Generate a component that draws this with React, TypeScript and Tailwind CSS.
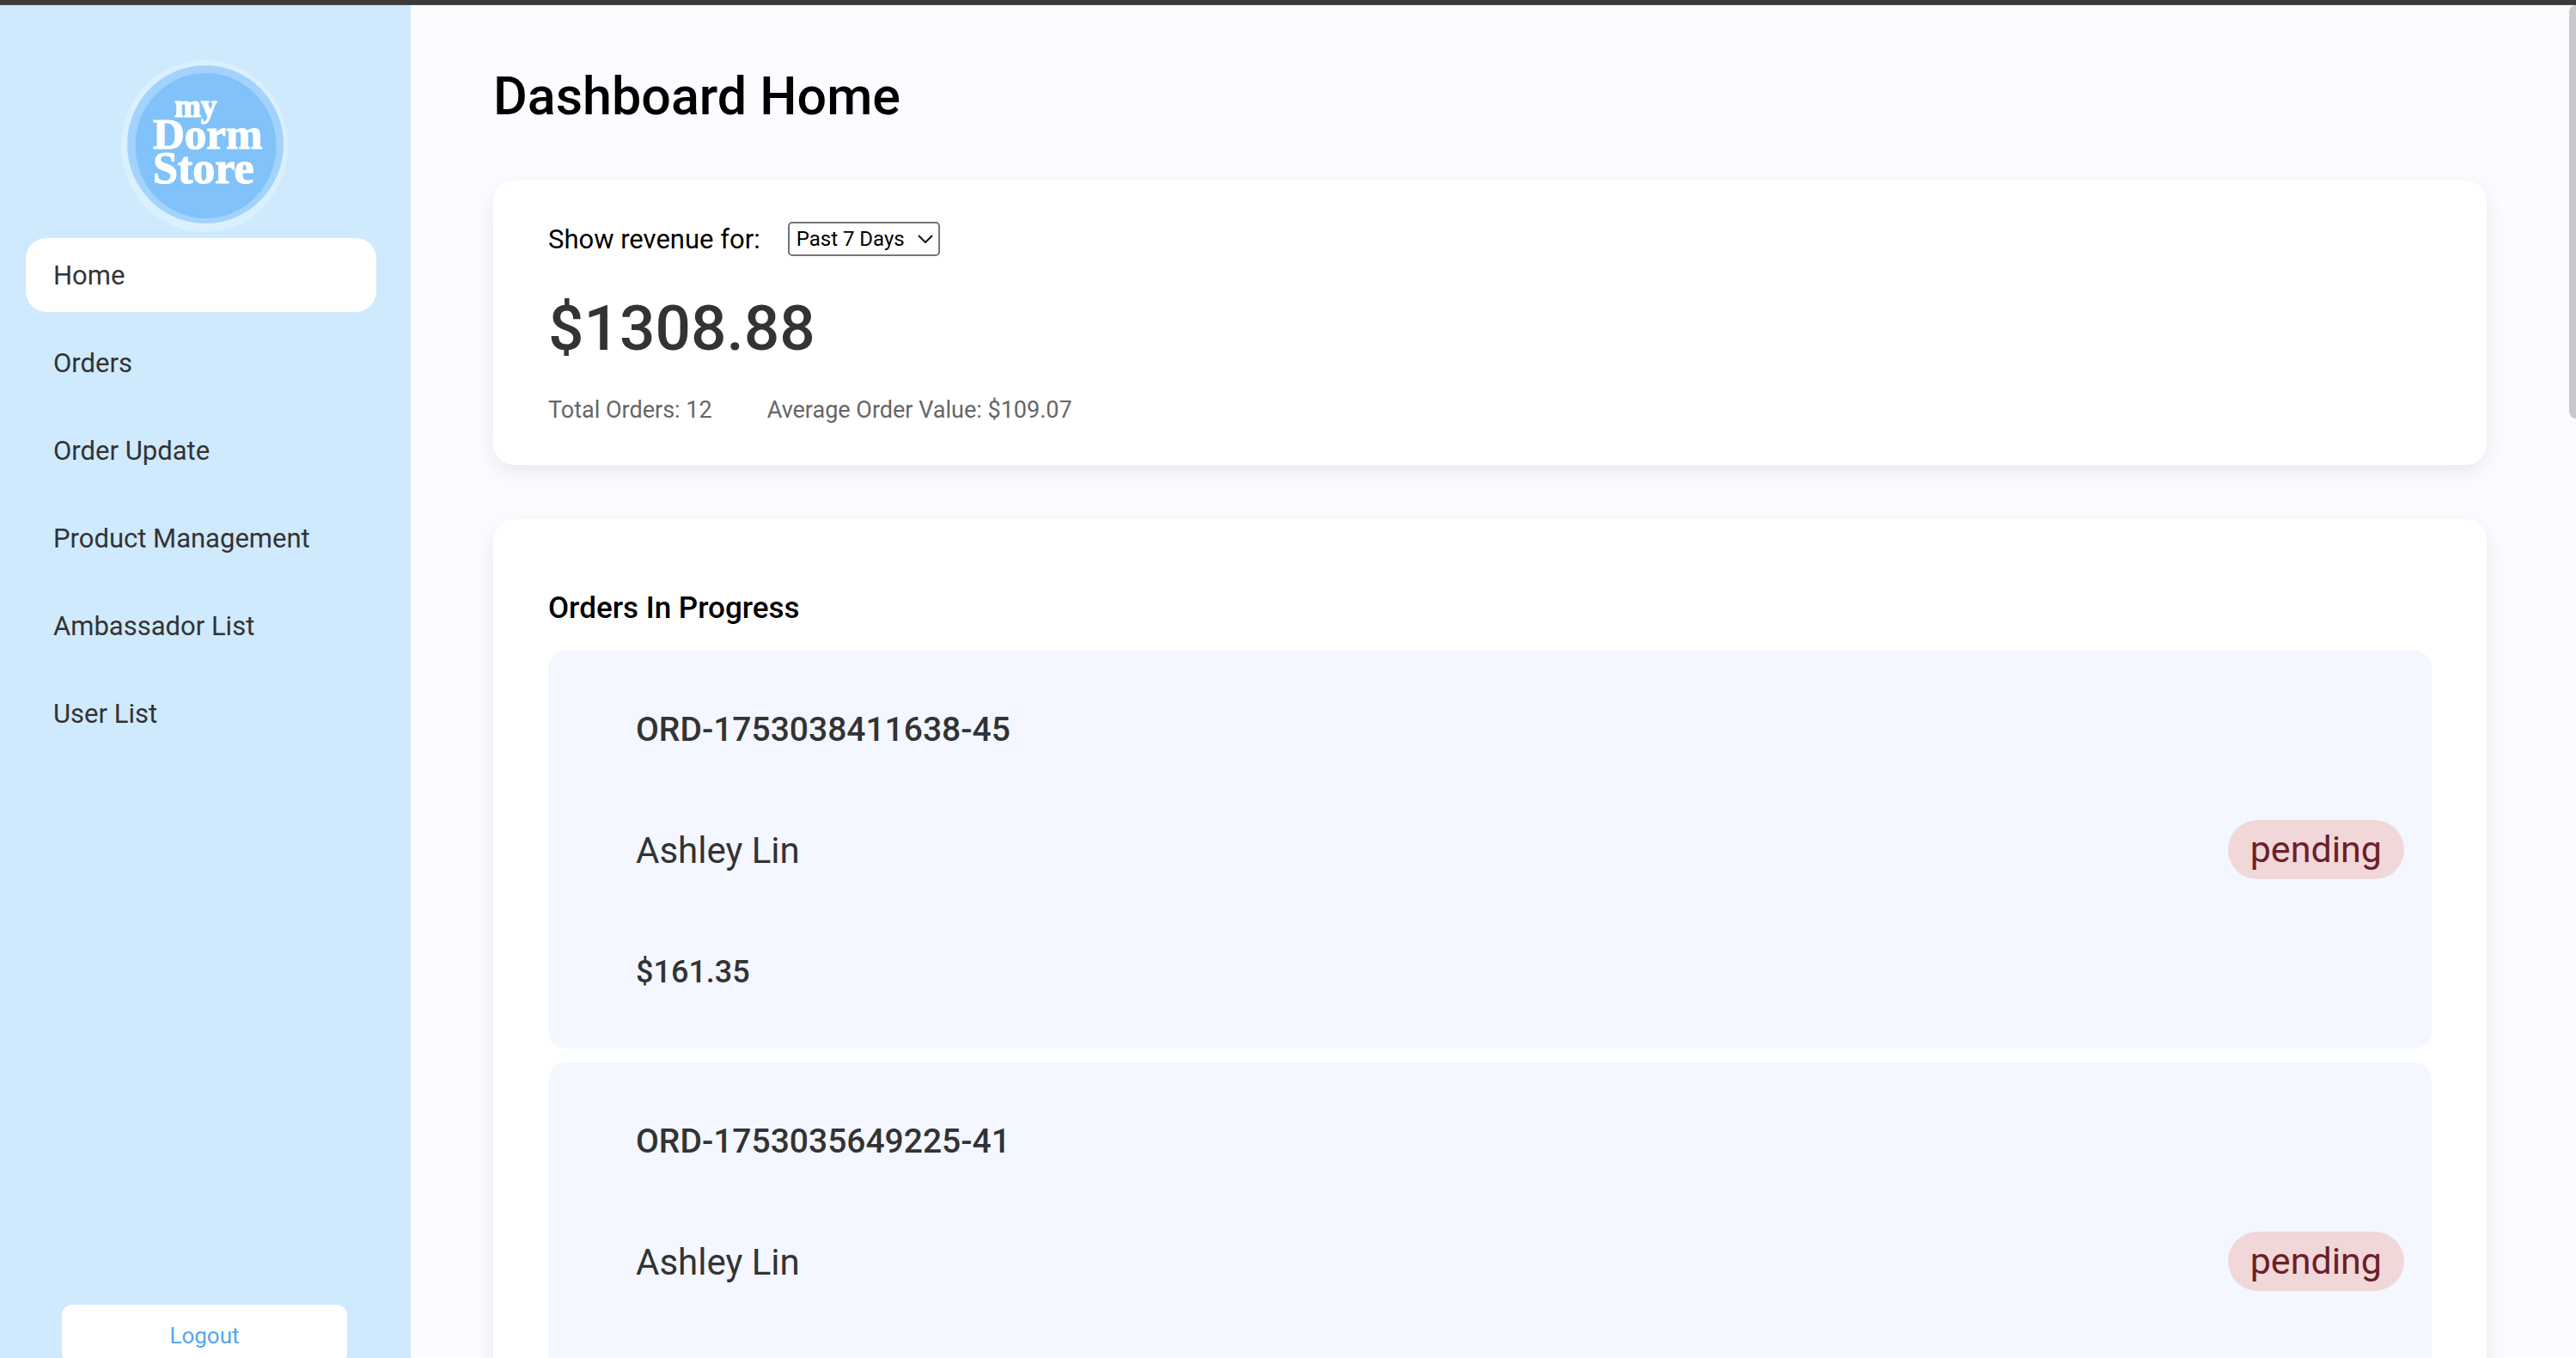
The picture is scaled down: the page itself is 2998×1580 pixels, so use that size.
import React from "react";

type Order = { id: string; customer: string; total: string; status: string };

const navItems = [
  "Home",
  "Orders",
  "Order Update",
  "Product Management",
  "Ambassador List",
  "User List",
];

const orders: Order[] = [
  { id: "ORD-1753038411638-45", customer: "Ashley Lin", total: "$161.35", status: "pending" },
  { id: "ORD-1753035649225-41", customer: "Ashley Lin", total: "$161.35", status: "pending" },
];

function Logo() {
  return (
    <svg
      viewBox="0 0 194 200"
      role="img"
      aria-label="my Dorm Store"
      className="h-[200px] w-[194px] self-center"
    >
      <ellipse cx="97" cy="100" rx="97" ry="100" fill="#dbf0fe" />
      <ellipse cx="98" cy="98" rx="91" ry="92" fill="#a3d3fc" />
      <ellipse cx="98.500" cy="99.500" rx="82" ry="84.500" fill="#80c2f9" />
      <g
        fill="#fff"
        stroke="#fff"
        strokeWidth="1.2"
        fontFamily="'Liberation Serif', serif"
        fontWeight="700"
      >
        <text x="62" y="66" fontSize="37">my</text>
        <text x="37" y="103" fontSize="51">Dorm</text>
        <text x="37" y="143" fontSize="52">Store</text>
      </g>
    </svg>
  );
}

function Sidebar() {
  return (
    <aside className="flex h-screen w-[478px] shrink-0 flex-col bg-[#cfe9fd] pt-16">
      <div className="flex justify-center pr-[3px]">
        <Logo />
      </div>
      <nav className="mt-[7px] flex flex-col gap-4 pr-10 pl-[30px]">
        {navItems.map((item, index) => (
          <a
            key={item}
            href="#"
            aria-current={index === 0 ? "page" : undefined}
            className={
              index === 0
                ? "flex h-[86px] items-center rounded-3xl bg-white px-8 pt-[3px] text-[31px]"
                : "flex h-[86px] items-center rounded-3xl px-8 pt-[3px] text-[31px]"
            }
          >
            {item}
          </a>
        ))}
      </nav>
      <button
        type="button"
        className="mr-[74px] ml-[72px] mt-auto h-[68px] rounded-xl bg-white pt-1 text-[26px] text-[#59a6ea]"
      >
        Logout
      </button>
    </aside>
  );
}

function RevenueCard() {
  return (
    <section className="rounded-3xl bg-white px-16 pt-12 pb-11 shadow-[0_8px_24px_rgba(0,0,0,0.08)]">
      <div className="flex h-10 items-center gap-8">
        <label htmlFor="range" className="pt-[3px] text-[31px] text-black">
          Show revenue for:
        </label>
        <div className="relative">
          <select
            id="range"
            defaultValue="7"
            className="block h-10 w-[177px] appearance-none rounded-[5px] border-2 border-[#767676] bg-white pl-2 text-[24px] leading-9 text-black"
          >
            <option value="7">Past 7 Days</option>
            <option value="30">Past 30 Days</option>
          </select>
          <svg
            viewBox="0 0 18 10"
            aria-hidden="true"
            className="pointer-events-none absolute top-[15px] right-2 h-[10px] w-[18px]"
          >
            <path d="M1 1 L9 9 L17 1" fill="none" stroke="#111" strokeWidth="2" />
          </svg>
        </div>
      </div>
      <p className="mt-11 text-[73px] leading-20 font-medium">$1308.88</p>
      <div className="mt-[35px] flex gap-16 text-[27px] leading-10 text-[#666]">
        <span>Total Orders: 12</span>
        <span>Average Order Value: $109.07</span>
      </div>
    </section>
  );
}

function OrderItem({ order }: { order: Order }) {
  return (
    <li className="flex items-center justify-between rounded-[20px] bg-[#f4f7ff] py-[62px] pr-8 pl-[102px]">
      <div className="flex flex-col gap-[85px] pt-[2px] -mb-px">
        <span className="text-[39px] leading-14 font-medium">{order.id}</span>
        <span className="text-[42px] leading-14">{order.customer}</span>
        <span className="text-[36px] leading-14 font-medium">{order.total}</span>
      </div>
      <span className="flex h-[69px] items-center rounded-full bg-[#f2d7d9] px-[26px] text-[43px] text-[#6b2028]">
        {order.status}
      </span>
    </li>
  );
}

export default function App() {
  return (
    <div className="relative h-screen overflow-hidden bg-[#fbfcff] font-['Roboto',sans-serif] text-[#333]">
      <div className="h-[6px] border-b border-[#4a4a4a] bg-[#3a3a3a]" />
      <div className="flex">
        <Sidebar />
        <main className="min-w-0 flex-1 pt-[70px] pr-[104px] pl-24">
          <h1 className="mb-[62px] text-[61px] leading-[72px] font-medium text-black">Dashboard Home</h1>
          <RevenueCard />
          <section className="mt-[63px] rounded-3xl bg-white px-16 pt-20 pb-16 shadow-[0_8px_24px_rgba(0,0,0,0.08)]">
            <h2 className="mb-[25px] text-[35px] leading-12 font-medium text-black">Orders In Progress</h2>
            <ul className="flex flex-col gap-4">
              {orders.map((order) => (
                <OrderItem key={order.id} order={order} />
              ))}
            </ul>
          </section>
        </main>
      </div>
      <div className="absolute top-[6px] right-0 h-[481px] w-2 rounded-l-lg bg-[#c8c9cb]" />
    </div>
  );
}
